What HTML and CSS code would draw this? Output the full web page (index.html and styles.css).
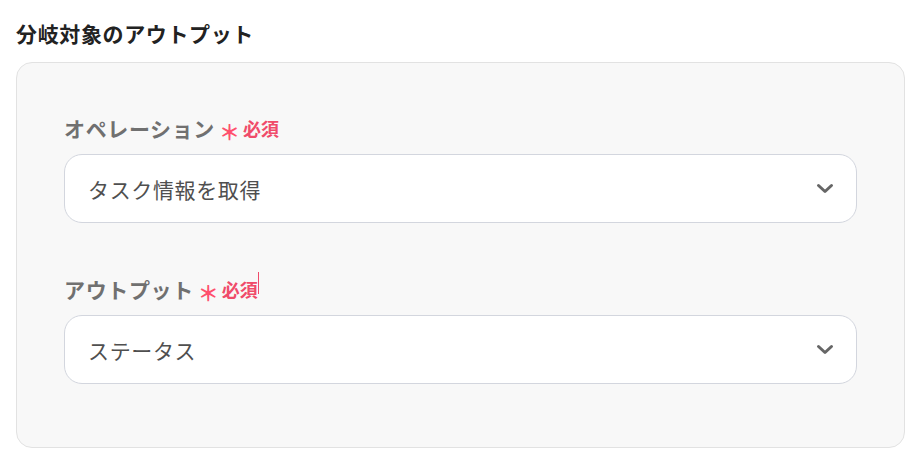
FILE: index.html
```html
<!DOCTYPE html>
<html lang="ja">
<head>
<meta charset="utf-8">
<link rel="stylesheet" href="styles.css">
</head>
<body>
<div class="page">
  <h2 class="title">分岐対象のアウトプット</h2>
  <div class="card">
    <div class="field">
      <div class="label">オペレーション<span class="ast">＊</span><span class="req">必須</span></div>
      <div class="select">
        <span class="value">タスク情報を取得</span>
        <svg class="chev" width="20" height="12" viewBox="0 0 20 12"><path d="M3.5 2.5 L10 8.5 L16.5 2.5" fill="none" stroke="#666" stroke-width="3" stroke-linecap="round" stroke-linejoin="round"/></svg>
      </div>
    </div>
    <div class="field">
      <div class="label">アウトプット<span class="ast">＊</span><span class="req">必須<span class="caret"></span></span></div>
      <div class="select">
        <span class="value">ステータス</span>
        <svg class="chev" width="20" height="12" viewBox="0 0 20 12"><path d="M3.5 2.5 L10 8.5 L16.5 2.5" fill="none" stroke="#666" stroke-width="3" stroke-linecap="round" stroke-linejoin="round"/></svg>
      </div>
    </div>
  </div>
</div>
</body>
</html>
```
FILE: styles.css
```css
html, body {
  margin: 0;
  padding: 0;
  background: #ffffff;
}
body {
  font-family: "Noto Sans CJK JP", "Noto Sans", sans-serif;
}
.page {
  padding: 18px 16px 0 16px;
  width: 889px;
}
.title {
  margin: 0 0 14px 0;
  font-size: 21px;
  letter-spacing: 0.03em;
  font-weight: 700;
  color: #222222;
  line-height: 30px;
}
.card {
  background: #f8f8f8;
  border: 1px solid #e2e2e2;
  border-radius: 16px;
  padding: 51px 47px 63px 47px;
  display: flex;
  flex-direction: column;
  gap: 52px;
}
.label {
  display: flex;
  align-items: center;
  font-size: 21px;
  font-weight: 700;
  letter-spacing: 0.03em;
  color: #707070;
  line-height: 28px;
  margin-bottom: 12px;
}
.ast {
  color: #ff4f6d;
  font-size: 21px;
  font-weight: 700;
  letter-spacing: 0;
  margin-left: 4px;
  margin-right: 3px;
  transform: translateY(3px);
}
.req {
  color: #f04b6a;
  font-size: 18px;
  font-weight: 700;
  letter-spacing: 0;
  position: relative;
}
.caret {
  position: absolute;
  right: -1px;
  top: -3px;
  width: 1px;
  height: 22px;
  background: #f04b6a;
}
.select {
  height: 67px;
  background: #ffffff;
  border: 1px solid #d3d6de;
  border-radius: 18px;
  display: flex;
  align-items: center;
  justify-content: space-between;
  padding: 0 21px 0 23px;
}
.value {
  font-size: 21px;
  letter-spacing: 0.03em;
  color: #4f4f4f;
}
.chev {
  display: block;
}
```
